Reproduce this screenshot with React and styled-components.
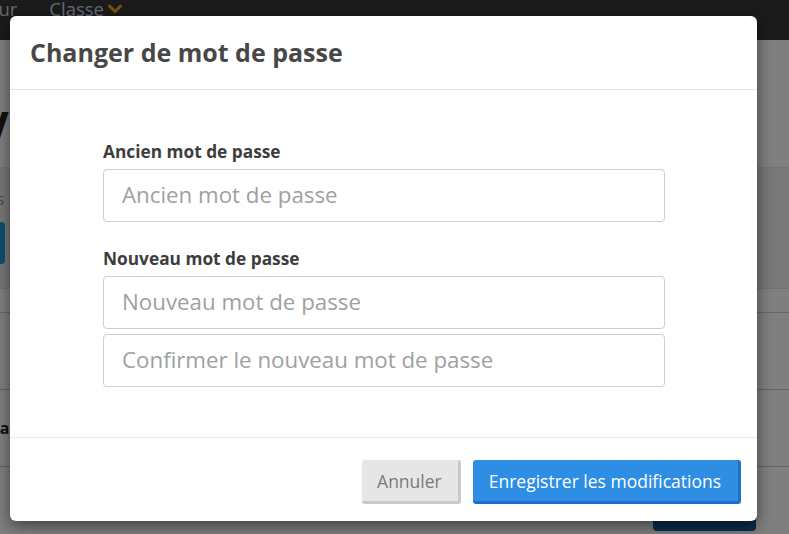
import React from "react";
import styled, { createGlobalStyle } from "styled-components";

const Global = createGlobalStyle`
  html, body { margin: 0; padding: 0; }
  body {
    font-family: "Open Sans", "Noto Sans", "Liberation Sans", sans-serif;
    background: #ffffff;
    overflow: hidden;
  }
  * { box-sizing: border-box; }
`;

const Page = styled.div`
  position: relative;
  width: 789px;
  height: 534px;
  overflow: hidden;
  background: #ffffff;
`;

const Nav = styled.nav`
  height: 40px;
  background: #363636;
  display: flex;
  align-items: flex-start;
  gap: 32px;
`;

const NavItem = styled.span`
  font-size: 18.5px;
  line-height: 18px;
  color: ${(p) => (p.$muted ? "#c4d6e8" : "#d0d0d0")};
  display: inline-flex;
  align-items: center;
  gap: 4px;
  margin-left: ${(p) => p.$offset || "0"};
  white-space: nowrap;
`;

const Content = styled.div`
  display: flex;
  flex-direction: column;
`;

const Heading = styled.h1`
  margin: 0 0 0 -20px;
  height: 127px;
  padding-top: 62px;
  font-size: 44px;
  font-weight: 700;
  color: #222;
  line-height: 50px;
  white-space: nowrap;
`;

const Panel = styled.div`
  height: 121px;
  background: #f1f1f1;
  border-top: 1px solid #e6e6e6;
  display: flex;
  flex-direction: column;
  padding-top: 20px;
  gap: 12px;
`;

const PanelText = styled.span`
  font-size: 16px;
  color: #999;
  margin-left: -48px;
  white-space: nowrap;
`;

const TealButton = styled.div`
  width: 60px;
  height: 42px;
  margin-left: -55px;
  background: #1b9fd6;
  border-radius: 4px;
`;

const Row = styled.div`
  height: ${(p) => p.$h || "77px"};
  border-top: ${(p) => (p.$first ? "1px solid #e2e2e2" : "none")};
  border-bottom: 1px solid #c8c8c8;
  display: flex;
  align-items: center;
`;

const RowText = styled.span`
  font-size: 16px;
  font-weight: 700;
  color: #222;
  margin-left: -30px;
  white-space: nowrap;
`;

const BottomBar = styled.div`
  display: flex;
  justify-content: flex-end;
  padding-right: 33px;
  margin-top: 50px;
`;

const DarkButton = styled.div`
  width: 103px;
  height: 14px;
  background: #155a9c;
  border-radius: 0 0 4px 4px;
`;

const Overlay = styled.div`
  position: absolute;
  inset: 0;
  background: rgba(0, 0, 0, 0.5);
`;

const Modal = styled.div`
  position: absolute;
  left: 10px;
  top: 16px;
  width: 747px;
  height: 505px;
  background: #fff;
  border-radius: 6px;
  box-shadow: 0 5px 15px rgba(0, 0, 0, 0.5);
  display: flex;
  flex-direction: column;
`;

const Header = styled.div`
  height: 74px;
  border-bottom: 1px solid #e5e5e5;
  display: flex;
  align-items: center;
  padding: 0 20px 2px;
`;

const Title = styled.h4`
  margin: 0;
  font-size: 25px;
  font-weight: 700;
  color: #474747;
  line-height: 30px;
`;

const Body = styled.div`
  flex: 1;
  padding: 50px 92px 0 93px;
  display: flex;
  flex-direction: column;
  gap: 25px;
`;

const Group = styled.div`
  display: flex;
  flex-direction: column;
  gap: 5px;
`;

const Label = styled.label`
  font-size: 17.3px;
  font-weight: 700;
  color: #3d3d3d;
  line-height: 23px;
  margin-bottom: 1px;
`;

const Input = styled.input`
  width: 100%;
  height: 53px;
  border: 1px solid #cfcfcf;
  border-radius: 4px;
  padding: 0 18px 2px;
  font-family: inherit;
  font-size: 22.3px;
  color: #555;
  background: #fff;
  outline: none;
  &::placeholder { color: #a0a0a0; }
`;

const Footer = styled.div`
  height: 84px;
  border-top: 1px solid #e8e8e8;
  display: flex;
  justify-content: flex-end;
  align-items: flex-start;
  padding: 22px 16px 0 0;
  gap: 12px;
`;

const Button = styled.button`
  height: 44px;
  padding: 0 ${(p) => (p.$primary ? "17px" : "16px")} 0 ${(p) => (p.$primary ? "16px" : "15px")};
  font-family: inherit;
  font-size: 17.5px;
  border: none;
  border-radius: 3px;
  cursor: pointer;
  color: ${(p) => (p.$primary ? "#ffffff" : "#7a7a7a")};
  background: ${(p) => (p.$primary ? "#2e8ee4" : "#e6e6e6")};
  border-right: 3px solid ${(p) => (p.$primary ? "#1d72c8" : "#c9c9c9")};
  border-bottom: 3px solid ${(p) => (p.$primary ? "#1d72c8" : "#c9c9c9")};
`;

const Chevron = () => (
  <svg width="14" height="10" viewBox="0 0 14 10">
    <path d="M1.5 2 L7 7.5 L12.5 2" fill="none" stroke="#f5a623" strokeWidth="3" strokeLinecap="round" strokeLinejoin="round" />
  </svg>
);

export default function App() {
  return (
    <Page>
      <Global />
      <Nav>
        <NavItem $offset="-76px">Professeur</NavItem>
        <NavItem $muted>
          Classe <Chevron />
        </NavItem>
      </Nav>
      <Content>
        <Heading>Vos classes</Heading>
        <Panel>
          <PanelText>classes</PanelText>
          <TealButton />
        </Panel>
        <Row $h="25px" $first />
        <Row />
        <Row>
          <RowText>Nota:</RowText>
        </Row>
        <BottomBar>
          <DarkButton />
        </BottomBar>
      </Content>
      <Overlay />
      <Modal>
        <Header>
          <Title>Changer de mot de passe</Title>
        </Header>
        <Body>
          <Group>
            <Label>Ancien mot de passe</Label>
            <Input type="password" placeholder="Ancien mot de passe" />
          </Group>
          <Group>
            <Label>Nouveau mot de passe</Label>
            <Input type="password" placeholder="Nouveau mot de passe" />
            <Input type="password" placeholder="Confirmer le nouveau mot de passe" />
          </Group>
        </Body>
        <Footer>
          <Button>Annuler</Button>
          <Button $primary>Enregistrer les modifications</Button>
        </Footer>
      </Modal>
    </Page>
  );
}
